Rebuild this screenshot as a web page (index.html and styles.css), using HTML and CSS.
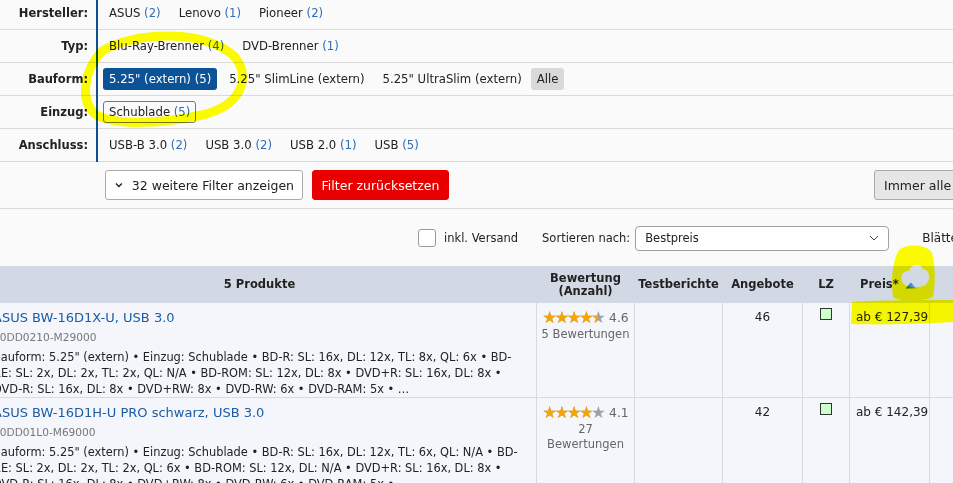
FILE: index.html
```html
<!DOCTYPE html>
<html lang="de">
<head>
<meta charset="utf-8">
<title>Produktliste</title>
<link rel="stylesheet" href="styles.css">
</head>
<body>
<div class="page">
  <div class="filters">
    <div class="frow">
      <div class="flabel">Hersteller:</div>
      <div class="fvals">
        <span class="fopt">ASUS <span class="cnt">(2)</span></span>
        <span class="fopt">Lenovo <span class="cnt">(1)</span></span>
        <span class="fopt">Pioneer <span class="cnt">(2)</span></span>
      </div>
    </div>
    <div class="frow">
      <div class="flabel">Typ:</div>
      <div class="fvals">
        <span class="fopt">Blu-Ray-Brenner <span class="cnt">(4)</span></span>
        <span class="fopt">DVD-Brenner <span class="cnt">(1)</span></span>
      </div>
    </div>
    <div class="frow">
      <div class="flabel">Bauform:</div>
      <div class="fvals">
        <span class="fopt active">5.25" (extern) (5)</span>
        <span class="fopt">5.25" SlimLine (extern)</span>
        <span class="fopt">5.25" UltraSlim (extern)</span>
        <span class="fopt all">Alle</span>
      </div>
    </div>
    <div class="frow">
      <div class="flabel">Einzug:</div>
      <div class="fvals">
        <span class="fopt boxed">Schublade <span class="cnt">(5)</span></span>
      </div>
    </div>
    <div class="frow">
      <div class="flabel">Anschluss:</div>
      <div class="fvals">
        <span class="fopt">USB-B 3.0 <span class="cnt">(2)</span></span>
        <span class="fopt">USB 3.0 <span class="cnt">(2)</span></span>
        <span class="fopt">USB 2.0 <span class="cnt">(1)</span></span>
        <span class="fopt">USB <span class="cnt">(5)</span></span>
      </div>
    </div>
  </div>

  <div class="btnrow">
    <button class="btn more"><svg class="chev" width="8" height="6" viewBox="0 0 8 6"><path d="M1 1.5 L4 4.5 L7 1.5" fill="none" stroke="#222" stroke-width="1.4"/></svg>32 weitere Filter anzeigen</button>
    <button class="btn reset">Filter zurücksetzen</button>
    <button class="btn always">Immer alle Filter anzeigen</button>
  </div>

  <div class="sortrow">
    <label class="ship"><span class="cbox"></span>inkl. Versand</label>
    <span class="sortlabel">Sortieren nach:</span>
    <div class="select"><span>Bestpreis</span><svg width="10" height="6" viewBox="0 0 10 6"><path d="M1 1 L5 5 L9 1" fill="none" stroke="#444" stroke-width="1"/></svg></div>
    <span class="pager">Blättern</span>
  </div>

  <table class="plist">
    <colgroup>
      <col class="c-prod"><col class="c-rate"><col class="c-test"><col class="c-off"><col class="c-lz"><col class="c-price"><col class="c-rest">
    </colgroup>
    <thead>
      <tr>
        <th>5 Produkte</th>
        <th>Bewertung<br>(Anzahl)</th>
        <th>Testberichte</th>
        <th>Angebote</th>
        <th>LZ</th>
        <th class="pricehead">Preis* <svg class="sorticon" width="12" height="7" viewBox="0 0 12 7"><defs><linearGradient id="tg" x1="0" x2="1"><stop offset="0" stop-color="#24602a"/><stop offset="0.45" stop-color="#3f86c9"/><stop offset="1" stop-color="#8bb8ec"/></linearGradient></defs><path d="M6 0.5 L11.5 6.5 L0.5 6.5 Z" fill="url(#tg)"/></svg></th>
        <th></th>
      </tr>
    </thead>
    <tbody>
      <tr>
        <td class="prod">
          <a class="ptitle">ASUS BW-16D1X-U, USB 3.0</a>
          <div class="psku">90DD0210-M29000</div>
          <p class="pdesc">Bauform: 5.25" (extern) • Einzug: Schublade • BD-R: SL: 16x, DL: 12x, TL: 8x, QL: 6x • BD-RE: SL: 2x, DL: 2x, TL: 2x, QL: N/A • BD-ROM: SL: 12x, DL: 8x • DVD+R: SL: 16x, DL: 8x • DVD-R: SL: 16x, DL: 8x • DVD+RW: 8x • DVD-RW: 6x • DVD-RAM: 5x • …</p>
        </td>
        <td class="rate">
          <div class="stars-line"><span class="stars"><span class="s-bg">★★★★★</span><span class="s-fg" style="width:92%">★★★★★</span></span> <span class="score">4.6</span></div>
          <div class="nrev">5 Bewertungen</div>
        </td>
        <td></td>
        <td class="offers">46</td>
        <td class="lz"><span class="lzbox"></span></td>
        <td class="price">ab € 127,39</td>
        <td></td>
      </tr>
      <tr>
        <td class="prod">
          <a class="ptitle">ASUS BW-16D1H-U PRO schwarz, USB 3.0</a>
          <div class="psku">90DD01L0-M69000</div>
          <p class="pdesc">Bauform: 5.25" (extern) • Einzug: Schublade • BD-R: SL: 16x, DL: 12x, TL: 6x, QL: N/A • BD-RE: SL: 2x, DL: 2x, TL: 2x, QL: 6x • BD-ROM: SL: 12x, DL: N/A • DVD+R: SL: 16x, DL: 8x • DVD-R: SL: 16x, DL: 8x • DVD+RW: 8x • DVD-RW: 6x • DVD-RAM: 5x • …</p>
        </td>
        <td class="rate">
          <div class="stars-line"><span class="stars"><span class="s-bg">★★★★★</span><span class="s-fg" style="width:80%">★★★★★</span></span> <span class="score">4.1</span></div>
          <div class="nrev">27 Bewertungen</div>
        </td>
        <td></td>
        <td class="offers">42</td>
        <td class="lz"><span class="lzbox"></span></td>
        <td class="price">ab € 142,39</td>
        <td></td>
      </tr>
    </tbody>
  </table>

  <svg class="marker" width="953" height="483" viewBox="0 0 953 483">
    <path d="M102 54 C 135 34, 207 32, 235 60 C 252 82, 240 109, 202 118 C 160 127, 113 129, 95 117 C 80 104, 83 74, 102 54" fill="none" stroke="#ffff00" stroke-width="9" stroke-linecap="round"/>
    <path fill-rule="evenodd" fill="#ffff00" d="M900 252 C 910 246, 928 248, 932 256 C 936 270, 935 290, 933 300 C 920 305, 900 305, 893 300 C 891 285, 892 262, 900 252 Z M903 286 C 899 280, 903 273, 909 274 C 911 267, 921 266, 923 272 C 929 272, 931 281, 927 286 C 926 291, 906 292, 903 286 Z"/>
    <path fill="#ffff00" d="M852 305 C 880 303, 920 303, 953 303 L 953 325 C 920 327, 880 328, 851 327 Z"/>
  </svg>
</div>
</body>
</html>
```

FILE: styles.css
```css
* { box-sizing: border-box; }
html, body { margin: 0; padding: 0; }
body {
  background: #fafafa;
  font-family: "DejaVu Sans", Verdana, sans-serif;
  font-size: 12px;
  color: #222;
  overflow: hidden;
  width: 953px;
  height: 483px;
}
.page { position: relative; width: 953px; }

/* filters */
.filters { margin-top: -3px; }
.frow {
  display: flex;
  height: 33px;
  border-bottom: 1px solid #dadada;
}
.flabel {
  width: 96px;
  flex: none;
  text-align: right;
  padding-right: 8px;
  font-weight: bold;
  line-height: 32px;
  font-size: 11.5px;
}
.fvals {
  display: flex;
  align-items: center;
  gap: 6px;
  border-left: 2px solid #0d4f91;
  margin-bottom: -1px;
  padding-left: 5px;
  padding-bottom: 1px;
  font-size: 11.7px;
}
.fopt {
  padding: 0 6px;
  height: 22px;
  line-height: 22px;
  border-radius: 3px;
  white-space: nowrap;
}
.cnt { color: #2f6db5; }
.fopt.active { background: #0b5296; color: #fff; }
.fopt.active .cnt { color: #fff; }
.fopt.all { background: #d9d9d9; padding: 0 6px; margin-left: -3px; }
.fopt.boxed { border: 1px solid #777; line-height: 20px; padding: 0 5px; }

/* buttons */
.btnrow {
  display: flex;
  align-items: center;
  gap: 9px;
  height: 47px;
  padding-left: 105px;
  border-bottom: 1px solid #dadada;
}
.btn {
  height: 30px;
  border-radius: 3px;
  font-family: inherit;
  font-size: 12.5px;
  padding: 0 8px;
  white-space: nowrap;
  flex: none;
}
.btn.more { background: #fff; border: 1px solid #aaa; color: #222; display: flex; align-items: center; padding: 0 8px; width: 198px; }
.chev { margin: 0 9px 0 1px; }
.btn.reset { background: #e80000; border: 1px solid #e80000; color: #fff; width: 137px; }
.btn.always { background: #e6e6e6; border: 1px solid #aaa; color: #222; margin-left: 416px; padding: 0 9px; }

/* sort row */
.sortrow {
  display: flex;
  align-items: center;
  height: 57px;
  padding-left: 418px;
  padding-top: 1px;
  white-space: nowrap;
}
.sortrow > * { flex: none; }
.ship { display: flex; align-items: center; color: #222; font-size: 11.5px; }
.cbox {
  width: 18px; height: 18px;
  border: 1px solid #9a9a9a;
  border-radius: 3px;
  background: #fff;
  margin-right: 8px;
}
.sortlabel { margin-left: 24px; margin-right: 5px; font-size: 11.5px; }
.select {
  width: 254px;
  height: 25px;
  border: 1px solid #a0a0a0;
  border-radius: 4px;
  background: #fff;
  display: flex;
  align-items: center;
  justify-content: space-between;
  padding: 0 9px;
  font-size: 11.5px;
}
.pager { margin-left: 33px; }

/* table */
.plist {
  margin-left: -18px;
  border-collapse: collapse;
  table-layout: fixed;
  width: 1010px;
}
.c-prod { width: 554px; }
.c-rate { width: 98px; }
.c-test { width: 88px; }
.c-off { width: 80px; }
.c-lz { width: 47px; }
.c-price { width: 80px; }
.c-rest { width: 63px; }
.plist th {
  background: #d3d9e4;
  font-size: 11.5px;
  font-weight: bold;
  height: 37px;
  padding: 0 2px;
  border-left: 1px solid #d3d9e4;
  line-height: 13px;
  text-align: center;
  white-space: nowrap;
}
.plist th.pricehead { text-align: left; padding-left: 10px; }
.sorticon { margin-left: 2px; vertical-align: -1px; }
.plist td {
  background: #f4f6fb;
  border: 1px solid #dadada;
  border-top: none;
  vertical-align: top;
  padding: 7px 4px 8px;
}
.plist td.prod { padding: 6px 8px 0 10px; }
.ptitle { color: #1c5ca4; font-size: 13px; display: block; line-height: 17px; }
.psku { color: #777; font-size: 10.6px; margin-top: 4px; line-height: 15px; }
.pdesc { margin: 4px 0 0; line-height: 16px; font-size: 11.4px; color: #222; }
.plist td.rate { text-align: center; color: #666; padding: 6px 3px 0; }
.stars-line { white-space: nowrap; line-height: 18px; }
.stars { position: relative; display: inline-block; font-size: 16.5px; letter-spacing: -2.6px; line-height: 18px; vertical-align: -1px; }
.s-bg { color: #a0a0a0; }
.s-fg { position: absolute; left: 0; top: 0; overflow: hidden; color: #f6a500; white-space: nowrap; }
.score { color: #666; font-size: 12.3px; margin-left: 2px; }
.nrev { line-height: 15px; font-size: 11.5px; }
.offers { text-align: center; }
.lz { text-align: center; }
.lzbox {
  display: inline-block;
  width: 12px; height: 12px;
  background: #ccffcc;
  border: 1px solid #333;
  vertical-align: top;
  margin-top: -2px;
}
.plist td.price { padding-left: 6px; white-space: nowrap; }

.marker {
  position: absolute;
  left: 0;
  top: 0;
  pointer-events: none;
  mix-blend-mode: multiply;
}
```
